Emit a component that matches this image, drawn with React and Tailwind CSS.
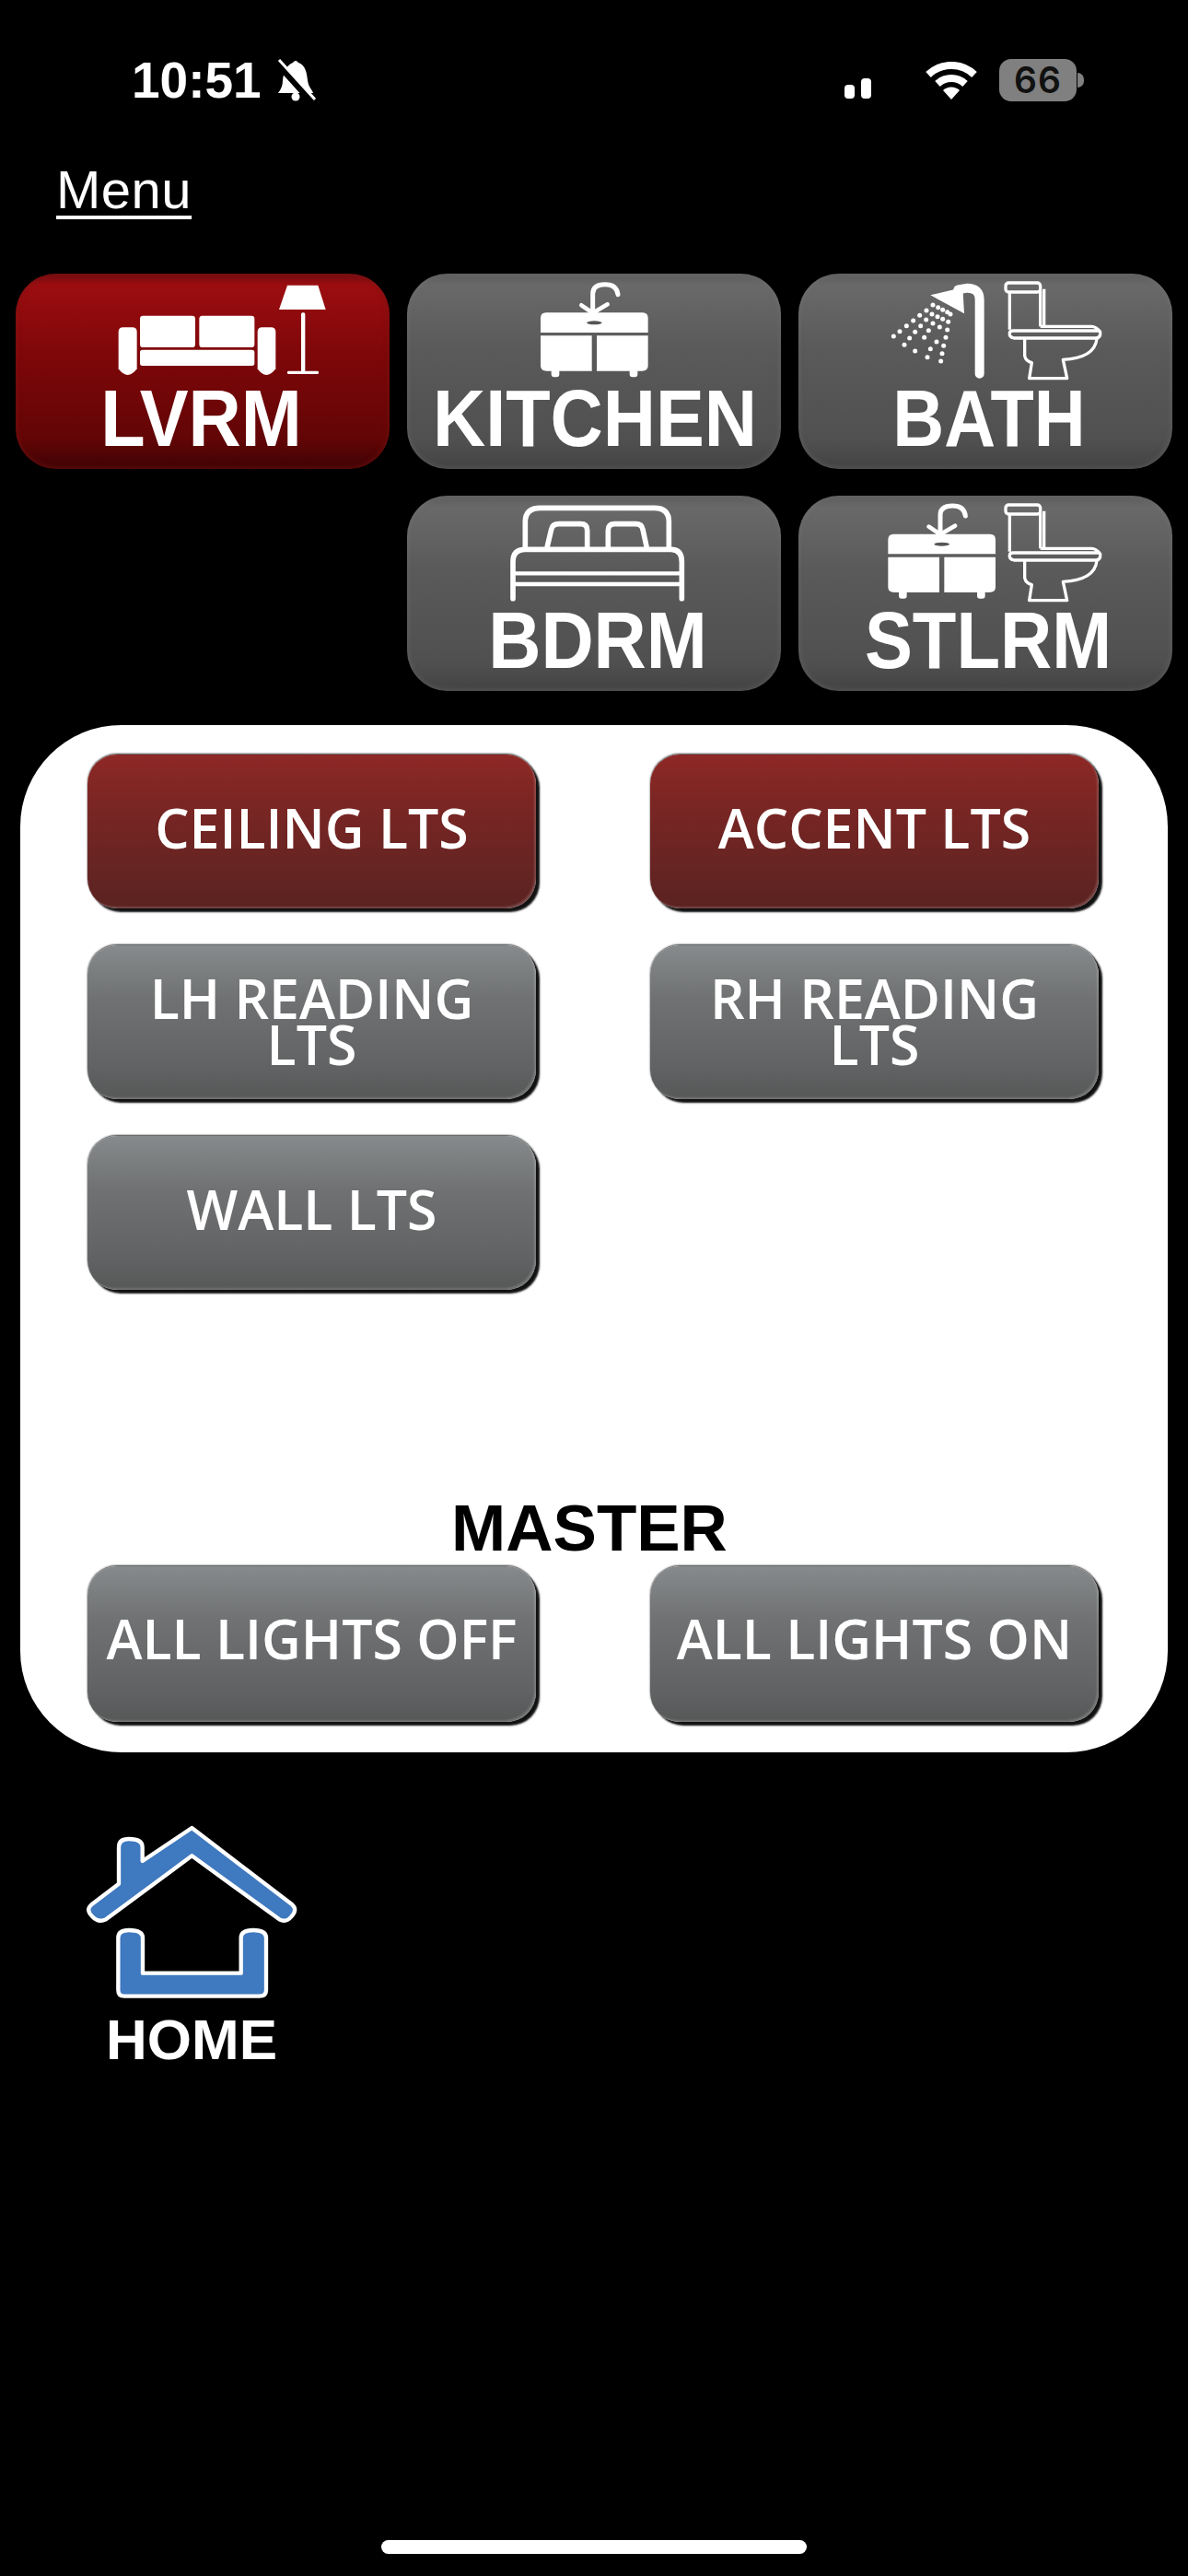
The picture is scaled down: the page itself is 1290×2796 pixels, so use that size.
import React from 'react';

const SofaLamp = () => (
  <svg viewBox="50 50 1218 342" className="w-full h-[114px] overflow-visible" fill="#fff">
    <path d="M385 240 Q385 225 400 225 L430 225 Q445 225 445 240 L445 360 Q430 380 415 380 Q400 380 385 360 Z" />
    <path d="M838 240 Q838 225 853 225 L882 225 Q897 225 897 240 L897 360 Q882 380 867 380 Q852 380 838 360 Z" />
    <rect x="455" y="187" width="180" height="103" rx="10" />
    <rect x="648" y="187" width="180" height="103" rx="10" />
    <rect x="455" y="298" width="373" height="52" rx="8" />
    <polygon points="935,88 1035,88 1060,167 908,167" />
    <rect x="980" y="177" width="13" height="195" rx="5" />
    <rect x="935" y="367" width="102" height="10" rx="4" />
  </svg>
);

// drawn in the kitchen button's own coordinates
const Sink = ({ transform }) => (
  <g transform={transform}>
    <path d="M640 178 L640 115 Q640 85 680 85 Q718 85 722 118" fill="none" stroke="#fff" strokeWidth="15" strokeLinecap="round" />
    <path d="M603 153 L640 178 L688 150" fill="none" stroke="#fff" strokeWidth="14" strokeLinecap="round" />
    <path d="M470 195 Q470 177 488 177 L802 177 Q820 177 820 195 L820 242 L470 242 Z" fill="#fff" />
    <ellipse cx="645" cy="210" rx="25" ry="6" fill="#555" />
    <path d="M470 252 L637 252 L637 367 L490 367 Q470 367 470 350 Z" fill="#fff" />
    <path d="M653 252 L820 252 L820 350 Q820 367 800 367 L653 367 Z" fill="#fff" />
    <rect x="505" y="360" width="26" height="27" rx="9" fill="#fff" />
    <rect x="760" y="360" width="26" height="27" rx="9" fill="#fff" />
  </g>
);

const Toilet = () => (
  <g fill="none" stroke="#fff" strokeWidth="10" strokeLinejoin="round">
    <rect x="695" y="80" width="113" height="30" rx="10" />
    <path d="M708 110 L708 232 M808 105 L808 222 M820 100 L820 222" />
    <path d="M808 222 L975 222 Q990 222 1003 240 Q1005 258 990 260 L722 260 Q706 256 708 244 Q708 236 720 236 L1003 236" />
    <path d="M757 262 L757 318 Q760 335 780 340 L772 391 L895 391 L882 330 Q985 325 992 262" />
  </g>
);

const drops = [
  [330, 254], [350, 238], [372, 220], [394, 203], [415, 186], [437, 170], [458, 152], [475, 160], [490, 168], [505, 175], [515, 182],
  [365, 282], [382, 260], [400, 240], [418, 220], [436, 200], [455, 182], [473, 190], [490, 198], [508, 207],
  [400, 302], [430, 258], [444, 235], [458, 212], [480, 224], [505, 233],
  [440, 322], [450, 295], [470, 272], [500, 258], [484, 335], [488, 310], [493, 285],
];

const ShowerToilet = () => (
  <svg viewBox="20 50 1218 342" className="w-full h-[114px] overflow-visible">
    <path d="M610 376 L610 135 Q610 97 570 97 L540 102" fill="none" stroke="#fff" strokeWidth="30" strokeLinecap="round" />
    <polygon points="450,120 555,95 560,180" fill="#fff" />
    {drops.map(([x, y]) => (
      <circle key={`${x}-${y}`} cx={x} cy={y} r="7.5" fill="#fff" />
    ))}
    <Toilet />
  </svg>
);

const KitchenSink = () => (
  <svg viewBox="35 50 1218 342" className="w-full h-[114px] overflow-visible">
    <Sink />
  </svg>
);

const SinkToilet = () => (
  <svg viewBox="20 50 1218 342" className="w-full h-[114px] overflow-visible">
    <Sink transform="translate(-158 -2)" />
    <Toilet />
  </svg>
);

const Bed = () => (
  <svg viewBox="35 25 1218 342" className="w-full h-[114px] overflow-visible" fill="none" stroke="#fff" strokeWidth="17" strokeLinecap="round" strokeLinejoin="round">
    <path d="M420 190 L420 110 Q420 65 470 65 L840 65 Q888 65 888 110 L888 190" />
    <path d="M492 190 L505 135 Q508 117 530 117 L600 117 Q622 117 622 138 L622 190" />
    <path d="M815 190 L803 135 Q800 117 780 117 L712 117 Q690 117 690 138 L690 190" />
    <path d="M380 360 L380 240 Q380 200 420 200 L895 200 Q930 200 930 240 L930 360" />
    <path d="M385 278 L925 278 M385 313 L925 313" strokeWidth="13" strokeLinecap="butt" />
  </svg>
);

const rooms = [
  { label: 'LVRM', icon: SofaLamp, active: true, text: 'scale-x-[0.9] -ml-[3px]' },
  { label: 'KITCHEN', icon: KitchenSink, text: 'scale-x-[0.9] ml-[2px]' },
  { label: 'BATH', icon: ShowerToilet, text: 'scale-x-[0.88] ml-[8px]' },
  { label: 'BDRM', icon: Bed, text: 'scale-x-[0.9] ml-[8px]', wrap: 'col-start-2' },
  { label: 'STLRM', icon: SinkToilet, text: 'scale-x-[0.885] ml-[6px]' },
];

const RoomButton = ({ label, icon: Icon, active, text, wrap = '' }) => (
  <div
    className={`${wrap} h-[212px] rounded-[44px] overflow-hidden flex flex-col ${
      active
        ? 'bg-[linear-gradient(180deg,#740c10_0%,#9c0d10_6%,#7e0709_42%,#620506_85%,#3f0304_100%)] shadow-[inset_0_0_5px_2px_rgba(120,20,20,0.5)]'
        : 'bg-[linear-gradient(180deg,#5c5c5c_0%,#696969_6%,#5a5a5a_38%,#505050_85%,#434343_100%)] shadow-[inset_0_0_5px_2px_rgba(120,120,120,0.3)]'
    }`}
  >
    <Icon />
    <span className={`font-bold text-[88px] leading-[85px] text-white text-center whitespace-nowrap ${text}`}>{label}</span>
  </div>
);

const LightButton = ({ active, children, className = 'h-[167px]', textClass = 'pb-[10px]' }) => (
  <div
    className={`rounded-[32px] flex items-center justify-center text-center text-white text-[59px] leading-[50px] font-semibold font-['Open_Sans',sans-serif] shadow-[4px_4px_2px_#111,0_-1px_2px_#333,inset_-2px_-2px_2px_rgba(255,255,255,0.16)] ${
      active
        ? 'bg-[linear-gradient(180deg,#8e2825_0%,#7b2624_30%,#632422_80%,#5a2220_100%)]'
        : 'bg-[linear-gradient(180deg,#878a8c_0%,#6f7172_35%,#606263_80%,#565858_100%)]'
    } ${textClass} ${className}`}
  >
    {children}
  </div>
);

const Wifi = () => (
  <svg viewBox="0 0 58 41" className="w-[58px] h-[41px]" fill="none" stroke="#fff">
    <path d="M4 14 A36 36 0 0 1 54 14" strokeWidth="8" />
    <path d="M14 24 A22 22 0 0 1 44 24" strokeWidth="8" />
    <path d="M29 41 L20 31 A13 13 0 0 1 38 31 Z" fill="#fff" stroke="none" />
  </svg>
);

const MutedBell = () => (
  <svg viewBox="0 0 44 46" className="w-[44px] h-[46px] ml-[15px]">
    <path d="M19 4 Q22 0 25 4 C33 7 34 15 35 23 C36 31 40 33 41 37 L3 37 C6 33 8 29 8 23 C9 14 12 7 19 4 Z" fill="#fff" />
    <circle cx="22" cy="41" r="4.5" fill="#fff" />
    <path d="M1 3 L40 46" stroke="#000" strokeWidth="8" />
    <path d="M4 1 L43 44" stroke="#fff" strokeWidth="3" />
  </svg>
);

const HomeIcon = () => (
  <svg viewBox="84 60 720 570" className="w-[240px] h-[190px] overflow-visible" fill="#3f79bf" stroke="#fff" strokeWidth="13" strokeLinejoin="round">
    <path d="M118 322 L207 254 L207 135 Q207 108 240 108 Q284 108 284 135 L284 180 L445 72 L772 322 Q790 338 770 360 Q752 382 730 370 L445 163 L165 370 Q140 382 120 360 Q98 338 118 322 Z" />
    <path d="M205 430 Q205 405 240 405 Q285 405 285 430 L285 545 L605 545 L605 430 Q605 405 645 405 Q687 405 687 430 L687 600 Q687 620 665 620 L225 620 Q205 620 205 600 Z" />
  </svg>
);

export default function App() {
  return (
    <div className="w-[1290px] h-[2796px] bg-black overflow-hidden flex flex-col font-['Liberation_Sans',Arial,sans-serif]">
      {/* Status bar */}
      <div className="flex items-center h-[48px] mt-[63px] pl-[143px] pr-[113px] text-white">
        <span className="text-[55px] leading-none font-bold">10:51</span>
        <MutedBell />
        <div className="flex-1" />
        <div className="flex items-end gap-[7px] h-[22px] mr-[58px] mt-[18px]">
          <div className="w-[11px] h-[15px] rounded-[4px] bg-white" />
          <div className="w-[11px] h-[22px] rounded-[4px] bg-white" />
        </div>
        <Wifi />
        <div className="ml-[23px] w-[84px] h-[46px] rounded-[13px] bg-[#808080] flex items-center justify-center text-[#111] text-[39px] font-semibold tracking-[1px] font-['Inter',sans-serif]">
          66
        </div>
        <div className="ml-[1px] w-[7px] h-[16px] rounded-r-full bg-[#808080]" />
      </div>

      <a className="mt-[67px] ml-[61px] self-start text-white text-[58px] leading-[56px] tracking-[0.5px] underline decoration-[4px] underline-offset-[8px]">
        Menu
      </a>

      {/* Rooms */}
      <div className="grid grid-cols-[repeat(3,406px)] gap-x-[19px] gap-y-[29px] ml-[17px] mt-[63px]">
        {rooms.map((room) => (
          <RoomButton key={room.label} {...room} />
        ))}
      </div>

      {/* Lights panel */}
      <div className="mt-[37px] ml-[22px] w-[1246px] h-[1115px] rounded-[110px] bg-white flex flex-col pl-[73px] pt-[32px] pb-[33px]">
        <div className="grid grid-cols-[487px_487px] gap-x-[124px] gap-y-[40px]">
          <LightButton active>CEILING LTS</LightButton>
          <LightButton active>ACCENT LTS</LightButton>
          <LightButton textClass="pb-[4px]">
            LH READING
            <br />
            LTS
          </LightButton>
          <LightButton textClass="pb-[4px]">
            RH READING
            <br />
            LTS
          </LightButton>
          <LightButton>WALL LTS</LightButton>
        </div>
        <div className="mt-auto mb-[6px] pr-[83px] text-center font-bold text-black text-[71px] leading-[70px]">MASTER</div>
        <div className="grid grid-cols-[487px_487px] gap-x-[124px]">
          <LightButton className="h-[169px]" textClass="pb-[14px]">ALL LIGHTS OFF</LightButton>
          <LightButton className="h-[169px]" textClass="pb-[14px]">ALL LIGHTS ON</LightButton>
        </div>
      </div>

      {/* Home */}
      <div className="mt-[78px] ml-[88px] w-[240px] flex flex-col items-center">
        <HomeIcon />
        <span className="mt-[15px] text-white font-bold text-[62px] leading-[58px]">HOME</span>
      </div>

      <div className="mt-auto mb-[24px] ml-[414px] w-[462px] h-[15px] rounded-full bg-white" />
    </div>
  );
}
